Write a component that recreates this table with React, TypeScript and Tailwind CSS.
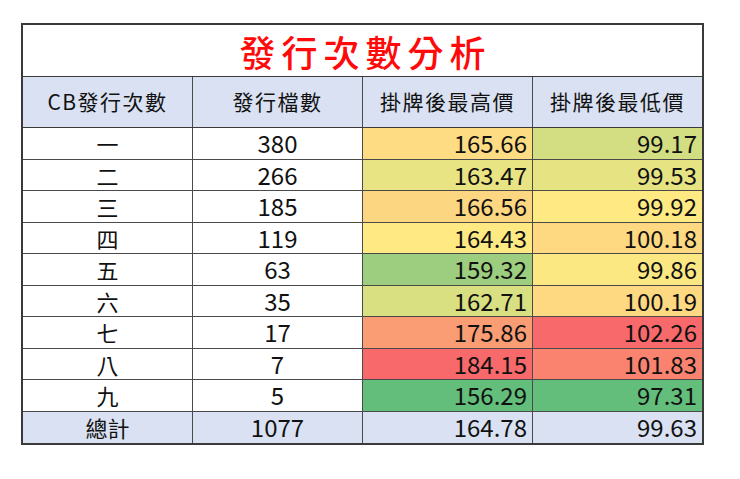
import React from "react";

type Row = {
  label: string;
  count: string;
  high: string;
  low: string;
  highBg: string;
  lowBg: string;
};

const rows: Row[] = [
  { label: "一", count: "380", high: "165.66", low: "99.17", highBg: "bg-[#fedc83]", lowBg: "bg-[#d2de81]" },
  { label: "二", count: "266", high: "163.47", low: "99.53", highBg: "bg-[#e9e483]", lowBg: "bg-[#e6e383]" },
  { label: "三", count: "185", high: "166.56", low: "99.92", highBg: "bg-[#fdd681]", lowBg: "bg-[#fee983]" },
  { label: "四", count: "119", high: "164.43", low: "100.18", highBg: "bg-[#fee983]", lowBg: "bg-[#fed981]" },
  { label: "五", count: "63", high: "159.32", low: "99.86", highBg: "bg-[#9dcd7e]", lowBg: "bg-[#fbe883]" },
  { label: "六", count: "35", high: "162.71", low: "100.19", highBg: "bg-[#d8e082]", lowBg: "bg-[#fed981]" },
  { label: "七", count: "17", high: "175.86", low: "102.26", highBg: "bg-[#fa9c74]", lowBg: "bg-[#f8696b]" },
  { label: "八", count: "7", high: "184.15", low: "101.83", highBg: "bg-[#f8696b]", lowBg: "bg-[#f9836f]" },
  { label: "九", count: "5", high: "156.29", low: "97.31", highBg: "bg-[#63be7b]", lowBg: "bg-[#63be7b]" },
];

const cols = "grid grid-cols-[170px_170px_170px_169px]";
const cell = "flex items-center border-r border-[#4a4a4a] px-[5px]";

export default function App() {
  return (
    <div
      className="min-h-screen bg-white pt-[23px] pl-[21px] text-[#111]"
      style={{ fontFamily: '"Noto Sans CJK TC", "Noto Sans", sans-serif' }}
    >
      <div className="w-[683px] border-2 border-[#3a3a3a]">
        {/* title */}
        <div className="flex h-[52px] items-center justify-center border-b border-[#3a3a3a] pl-[6px] text-[36px] font-medium leading-none tracking-[6px] text-[#ff0a0a]">
          發行次數分析
        </div>

        {/* header */}
        <div className={`${cols} h-[51px] border-b border-[#3a3a3a] bg-[#d9e1f2] text-[21px] tracking-[1.5px]`}>
          <div className={`${cell} justify-center`}>CB發行次數</div>
          <div className={`${cell} justify-center`}>發行檔數</div>
          <div className={`${cell} justify-center`}>掛牌後最高價</div>
          <div className="flex items-center justify-center">掛牌後最低價</div>
        </div>

        {/* data rows */}
        {rows.map((r) => (
          <div key={r.label} className={`${cols} h-[31.5px] border-b border-[#4a4a4a] text-[24px] leading-none`}>
            <div className={`${cell} justify-center text-[22px]`}>{r.label}</div>
            <div className={`${cell} justify-center`}>{r.count}</div>
            <div className={`${cell} justify-end ${r.highBg}`}>{r.high}</div>
            <div className={`flex items-center justify-end px-[5px] ${r.lowBg}`}>{r.low}</div>
          </div>
        ))}

        {/* total */}
        <div className={`${cols} h-[31px] bg-[#d9e1f2] text-[24px] leading-none`}>
          <div className={`${cell} justify-center text-[22px]`}>總計</div>
          <div className={`${cell} justify-center`}>1077</div>
          <div className={`${cell} justify-end`}>164.78</div>
          <div className="flex items-center justify-end px-[5px]">99.63</div>
        </div>
      </div>
    </div>
  );
}
